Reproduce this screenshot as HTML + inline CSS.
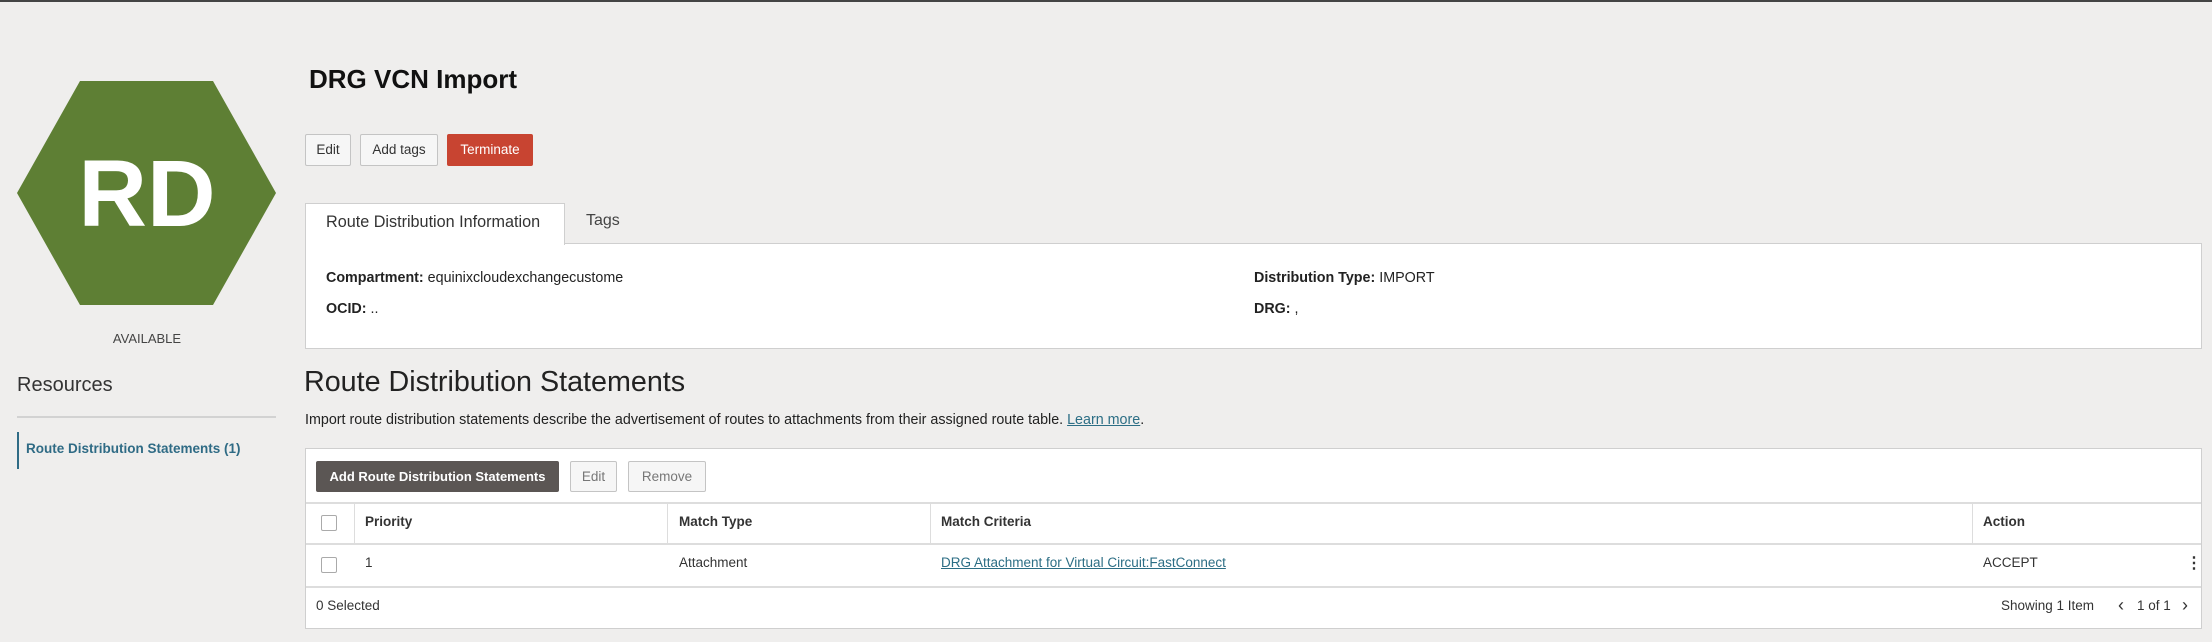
<!DOCTYPE html>
<html><head><meta charset="utf-8"><style>
*{box-sizing:border-box;margin:0;padding:0}
body{width:2212px;height:642px;background:#efeeed;font-family:"Liberation Sans",Arial,sans-serif;color:#222;position:relative;overflow:hidden;border-top:2px solid #444}
.a{position:absolute;white-space:nowrap}
.btn{position:absolute;height:32px;border:1px solid #c4c4c4;border-radius:2px;background:#f6f6f6;font-size:13.5px;line-height:30px;text-align:center;color:#333}
.box{position:absolute;background:#fff;border:1px solid #cfcfcf}
.cb{position:absolute;width:16px;height:16px;border:1px solid #aaa;border-radius:2px;background:#fff}
.h{position:absolute;font-size:13.5px;font-weight:bold;color:#333}
.c{position:absolute;font-size:13.5px;color:#333}
</style></head><body>
<svg class="a" style="left:17px;top:79px" width="260" height="225" viewBox="0 0 260 225"><polygon points="0,112 63,0 196,0 259,112 196,224 63,224" fill="#5e7f34"/><text x="130" y="145" text-anchor="middle" font-family="Liberation Sans,Arial,sans-serif" font-weight="bold" font-size="95" fill="#fff">RD</text></svg>
<div class="a" style="left:0;width:294px;text-align:center;top:329px;font-size:13px;color:#444">AVAILABLE</div>
<div class="a" style="left:17px;top:372px;font-size:20px;color:#333">Resources</div>
<div class="a" style="left:17px;top:414px;width:259px;height:2px;background:#d2d2d2"></div>
<div class="a" style="left:17px;top:430px;width:2px;height:37px;background:#2f6b85"></div>
<div class="a" style="left:26px;top:439px;font-size:13.5px;font-weight:bold;color:#2f6b85">Route Distribution Statements (1)</div>

<div class="a" style="left:309px;top:62px;font-size:26px;font-weight:bold;color:#111">DRG VCN Import</div>
<div class="btn" style="left:305px;top:132px;width:46px">Edit</div>
<div class="btn" style="left:360px;top:132px;width:78px">Add tags</div>
<div class="btn" style="left:447px;top:132px;width:86px;background:#c84431;border-color:#c84431;color:#fff">Terminate</div>

<div class="box" style="left:305px;top:241px;width:1897px;height:106px"></div>
<div class="a" style="left:305px;top:201px;width:260px;height:42px;background:#fff;border:1px solid #cfcfcf;border-bottom:none"></div>
<div class="a" style="left:326px;top:211px;font-size:16.2px;color:#333">Route Distribution Information</div>
<div class="a" style="left:586px;top:210px;font-size:16px;color:#444">Tags</div>
<div class="a" style="left:326px;top:268px;font-size:14.3px;color:#222"><b>Compartment:</b> equinixcloudexchangecustome</div>
<div class="a" style="left:326px;top:299px;font-size:14.3px;color:#222"><b>OCID:</b> ..</div>
<div class="a" style="left:1254px;top:268px;font-size:14.3px;color:#222"><b>Distribution Type:</b> IMPORT</div>
<div class="a" style="left:1254px;top:299px;font-size:14.3px;color:#222"><b>DRG:</b> ,</div>

<div class="a" style="left:304px;top:364px;font-size:28.7px;color:#222">Route Distribution Statements</div>
<div class="a" style="left:305px;top:410px;font-size:14.3px;color:#222">Import route distribution statements describe the advertisement of routes to attachments from their assigned route table. <span style="color:#2c6e85;text-decoration:underline">Learn more</span>.</div>

<div class="box" style="left:305px;top:446px;width:1897px;height:181px"></div>
<div class="btn" style="left:316px;top:459px;width:243px;height:31px;background:#5b5654;border-color:#5b5654;color:#fff;font-weight:bold;font-size:13px">Add Route Distribution Statements</div>
<div class="btn" style="left:570px;top:459px;width:47px;height:31px;color:#777">Edit</div>
<div class="btn" style="left:628px;top:459px;width:78px;height:31px;color:#777">Remove</div>
<div class="a" style="left:306px;top:500px;width:1895px;height:2px;background:#ddd"></div>
<div class="a" style="left:306px;top:541px;width:1895px;height:2px;background:#ddd"></div>
<div class="a" style="left:306px;top:584px;width:1895px;height:2px;background:#ddd"></div>
<div class="a" style="left:354px;top:502px;width:1px;height:39px;background:#ddd"></div>
<div class="a" style="left:667px;top:502px;width:1px;height:39px;background:#ddd"></div>
<div class="a" style="left:930px;top:502px;width:1px;height:39px;background:#ddd"></div>
<div class="a" style="left:1972px;top:502px;width:1px;height:39px;background:#ddd"></div>
<div class="cb" style="left:321px;top:513px"></div>
<div class="cb" style="left:321px;top:555px"></div>
<div class="h" style="left:365px;top:512px">Priority</div>
<div class="h" style="left:679px;top:512px">Match Type</div>
<div class="h" style="left:941px;top:512px">Match Criteria</div>
<div class="h" style="left:1983px;top:512px">Action</div>
<div class="c" style="left:365px;top:553px">1</div>
<div class="c" style="left:679px;top:553px">Attachment</div>
<div class="c" style="left:941px;top:553px;color:#2c6e85;text-decoration:underline">DRG Attachment for Virtual Circuit:FastConnect</div>
<div class="c" style="left:1983px;top:553px">ACCEPT</div>
<div class="c" style="left:2186px;top:551px;font-weight:bold;font-size:16px">&#8942;</div>
<div class="c" style="left:316px;top:596px">0 Selected</div>
<div class="c" style="left:2001px;top:596px">Showing 1 Item</div>
<div class="c" style="left:2118px;top:593px;font-size:18px">&#8249;</div>
<div class="c" style="left:2137px;top:596px">1 of 1</div>
<div class="c" style="left:2182px;top:593px;font-size:18px">&#8250;</div>
</body></html>
